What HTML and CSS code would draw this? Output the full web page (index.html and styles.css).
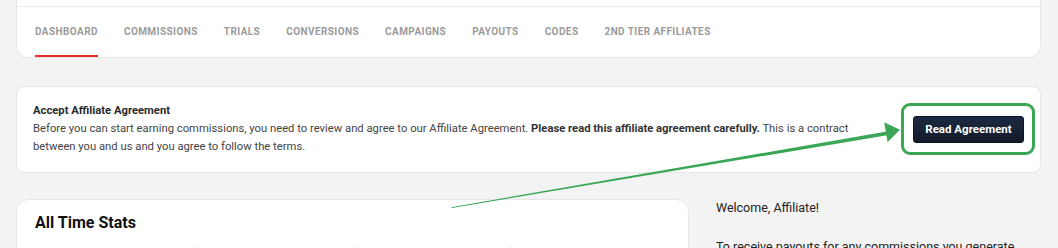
FILE: index.html
```html
<!DOCTYPE html>
<html lang="en">

<head>
    <meta charset="UTF-8">
    <meta name="viewport" content="width=device-width, initial-scale=1.0">
    <title>Affiliate Dashboard</title>
    <link rel="stylesheet" href="styles.css">
</head>

<body>
    <div class="pagina">
        <div class="cartao cartao-abas">
            <div class="cabecalho"></div>
            <ul class="abas">
                <li class="ativa">Dashboard</li>
                <li>Commissions</li>
                <li>Trials</li>
                <li>Conversions</li>
                <li>Campaigns</li>
                <li>Payouts</li>
                <li>Codes</li>
                <li>2nd Tier Affiliates</li>
            </ul>
        </div>

        <div class="cartao acordo">
            <div class="acordo-texto">
                <div class="acordo-titulo">Accept Affiliate Agreement</div>
                <p>
                    Before you can start earning commissions, you need to review and agree to our Affiliate Agreement.
                    <strong>Please read this affiliate agreement carefully.</strong> This is a contract
                    between you and us and you agree to follow the terms.
                </p>
            </div>
            <div class="destaque">
                <button class="botao-ler">Read Agreement</button>
            </div>
        </div>

        <div class="linha-baixo">
            <div class="cartao estatisticas">
                <h2>All Time Stats</h2>
                <div class="grade-stats">
                    <div></div>
                    <div></div>
                    <div></div>
                    <div></div>
                </div>
            </div>
            <div class="boas-vindas">
                <p>Welcome, Affiliate!</p>
                <p>To receive payouts for any commissions you generate, please add your payout details.</p>
            </div>
        </div>
    </div>

    <svg class="seta" width="1058" height="248" viewBox="0 0 1058 248">
        <polygon fill="#3ca657" points="451,207.2 451.8,208 888.8,135 888.1,131.3" />
        <polygon fill="#3ca657" points="900,129.8 884.2,122.2 887.6,142" />
    </svg>
</body>

</html>
```
FILE: styles.css
```css
body {
    margin: 0;
    background-color: #f3f3f3;
    font-family: Roboto, "Liberation Sans", sans-serif;
    color: #444;
    overflow: hidden;
}

.pagina {
    padding: 0 17px 0 16px;
    margin-top: -30px;
}

.cartao {
    background-color: #fff;
    border: 1px solid #e6e6e6;
    border-radius: 12px;
}

.cabecalho {
    height: 35px;
    border-bottom: 1px solid #ececec;
}

.abas {
    list-style: none;
    margin: 0;
    padding: 0 0 0 18px;
    display: flex;
    gap: 26px;
}

.abas li {
    height: 48px;
    line-height: 50px;
    font-size: 10px;
    font-weight: 700;
    letter-spacing: 0.42px;
    text-transform: uppercase;
    color: #9b9b9b;
    border-bottom: 2px solid transparent;
}

.abas li.ativa {
    border-bottom-color: #ee2a2a;
}

.acordo {
    margin-top: 28px;
    border-radius: 8px;
    padding: 15px 16px 16px;
    display: flex;
    align-items: center;
    gap: 40px;
}

.acordo-texto {
    flex: 1;
    font-size: 11.25px;
    line-height: 18px;
}

.acordo-titulo {
    font-weight: 700;
    color: #2b2b2b;
}

.acordo p {
    margin: 0;
}

.acordo strong {
    color: #333;
}

.destaque {
    position: relative;
}

.destaque::after {
    content: "";
    position: absolute;
    top: -13px;
    bottom: -12px;
    left: -12px;
    right: -11px;
    border: 3px solid #3ca657;
    border-radius: 9px;
}

.botao-ler {
    display: block;
    width: 111px;
    height: 27px;
    border: 1px solid #0e1522;
    border-radius: 3px;
    background: linear-gradient(#1d2a40, #131b2b);
    color: #fff;
    font-family: Roboto, "Liberation Sans", sans-serif;
    font-size: 11.5px;
    font-weight: 700;
    padding: 0;
}

.linha-baixo {
    display: flex;
    margin-top: 26px;
    gap: 27px;
}

.estatisticas {
    width: 635px;
    padding: 12px 18px 0;
    flex-shrink: 0;
}

.estatisticas h2 {
    margin: 0;
    font-size: 16px;
    line-height: 22px;
    color: #111;
}

.grade-stats {
    display: grid;
    grid-template-columns: repeat(4, 1fr);
    margin-top: 13px;
    height: 40px;
}

.grade-stats div:not(:first-child) {
    border-left: 1px solid #e6e6e6;
}

.boas-vindas {
    font-size: 12.5px;
    line-height: 18px;
    color: #222;
}

.boas-vindas p {
    margin: 0 0 21px;
}

.seta {
    position: absolute;
    top: 0;
    left: 0;
    pointer-events: none;
}
```
